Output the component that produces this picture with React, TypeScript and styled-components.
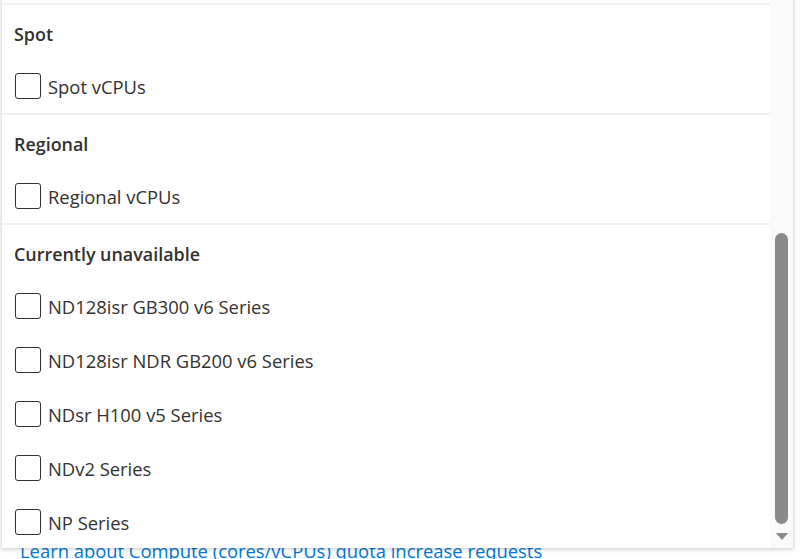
import React from 'react';
import styled, { createGlobalStyle } from 'styled-components';

const GlobalStyle = createGlobalStyle`
  html, body {
    margin: 0;
    padding: 0;
    background: #ffffff;
    font-family: 'Open Sans', 'Noto Sans', 'Liberation Sans', sans-serif;
    color: #323130;
  }
`;

interface Section {
  title: string;
  items: string[];
}

const sections: Section[] = [
  { title: 'Spot', items: ['Spot vCPUs'] },
  { title: 'Regional', items: ['Regional vCPUs'] },
  {
    title: 'Currently unavailable',
    items: [
      'ND128isr GB300 v6 Series',
      'ND128isr NDR GB200 v6 Series',
      'NDsr H100 v5 Series',
      'NDv2 Series',
      'NP Series'
    ]
  }
];

const Page = styled.div`
  position: relative;
  width: 805px;
  height: 559px;
  overflow: hidden;
`;

const PageBody = styled.div`
  display: flex;
  flex-direction: column;
  justify-content: flex-end;
  height: 100%;
  padding: 0 0 0 20px;
  box-sizing: border-box;
`;

const LearnLink = styled.a`
  font-size: 18.4px;
  line-height: 20px;
  color: #0078d4;
  text-decoration: none;
  white-space: nowrap;
  transform: translateY(2px);
`;

const Dropdown = styled.div`
  position: absolute;
  top: -2px;
  left: 1px;
  width: 791px;
  height: 550px;
  display: flex;
  background: #ffffff;
  border-left: 1px solid #e6e6e6;
  box-shadow: 0 2px 4px rgba(0, 0, 0, 0.14), 1px 0 3px rgba(0, 0, 0, 0.08);
  overflow: hidden;
`;

const List = styled.div`
  flex: 1;
  display: flex;
  flex-direction: column;
  padding-top: 5px;
`;

const Group = styled.div`
  border-top: 2px solid #f1f1f1;
`;

const Header = styled.div`
  height: 54px;
  display: flex;
  align-items: center;
  box-sizing: border-box;
  padding: 4px 0 0 12px;
  font-size: 17.9px;
  font-weight: 600;
  color: #323130;
`;

const Option = styled.label`
  height: 54px;
  display: flex;
  align-items: center;
  gap: 7px;
  padding-left: 13px;
  font-size: 18.4px;
  color: #323130;
  cursor: pointer;
`;

const Box = styled.span`
  width: 24px;
  height: 24px;
  border: 1.3px solid #323130;
  border-radius: 3px;
  flex-shrink: 0;
`;

const ScrollTrack = styled.div`
  width: 23px;
  background: #fafafa;
  display: flex;
  flex-direction: column;
  align-items: center;
  padding-top: 235px;
  box-sizing: border-box;
`;

const Thumb = styled.div`
  width: 13px;
  height: 291px;
  border-radius: 7px;
  background: #8a8a8a;
`;

const Arrow = styled.div`
  margin-top: 9px;
  width: 0;
  height: 0;
  border-left: 6px solid transparent;
  border-right: 6px solid transparent;
  border-top: 7px solid #8a8a8a;
`;

export default function App() {
  return (
    <>
      <GlobalStyle />
      <Page>
        <PageBody>
          <LearnLink href="#">Learn about Compute (cores/vCPUs) quota increase requests</LearnLink>
        </PageBody>
        <Dropdown>
          <List>
            {sections.map(s => (
              <Group key={s.title}>
                <Header>{s.title}</Header>
                {s.items.map(item => (
                  <Option key={item}>
                    <Box />
                    {item}
                  </Option>
                ))}
              </Group>
            ))}
          </List>
          <ScrollTrack>
            <Thumb />
            <Arrow />
          </ScrollTrack>
        </Dropdown>
      </Page>
    </>
  );
}
